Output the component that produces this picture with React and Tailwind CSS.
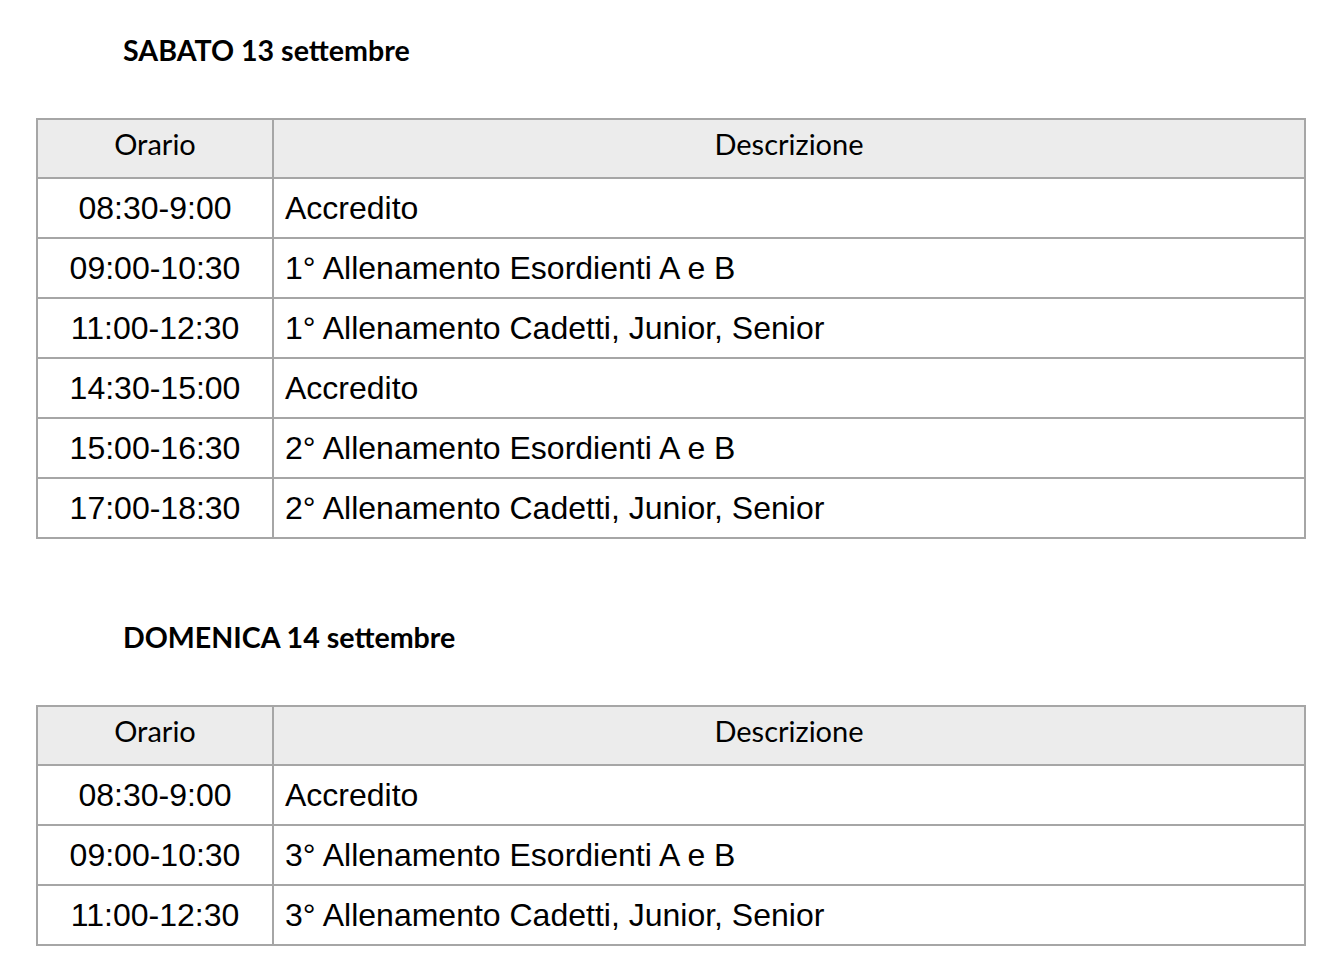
import React from "react";

const days = [
  {
    title: "SABATO 13 settembre",
    rows: [
      ["08:30-9:00", "Accredito"],
      ["09:00-10:30", "1° Allenamento Esordienti A e B"],
      ["11:00-12:30", "1° Allenamento Cadetti, Junior, Senior"],
      ["14:30-15:00", "Accredito"],
      ["15:00-16:30", "2° Allenamento Esordienti A e B"],
      ["17:00-18:30", "2° Allenamento Cadetti, Junior, Senior"],
    ],
  },
  {
    title: "DOMENICA 14 settembre",
    rows: [
      ["08:30-9:00", "Accredito"],
      ["09:00-10:30", "3° Allenamento Esordienti A e B"],
      ["11:00-12:30", "3° Allenamento Cadetti, Junior, Senior"],
    ],
  },
];

const DayTable = ({ day }) => {
  return (
    <div>
      <h2 className="pl-[87px] h-[40px] leading-[40px] font-['Lato',sans-serif] font-bold text-[28.6px] text-black mb-[48px]">
        {day.title}
      </h2>

      <table className="w-full border-collapse">
        <thead>
          <tr className="bg-[#ececec] font-['Lato',sans-serif] text-[29px] text-black">
            <th className="w-[236px] h-[59px] pt-0 pb-[10px] font-normal text-center border-2 border-[#a6a6a6]">
              Orario
            </th>
            <th className="h-[59px] pt-0 pb-[10px] font-normal text-center border-2 border-[#a6a6a6]">
              Descrizione
            </th>
          </tr>
        </thead>
        <tbody className="font-['Liberation_Sans',Arial,sans-serif] text-[32px] text-black">
          {day.rows.map((r, i) => (
            <tr key={i}>
              <td className="h-[60px] p-0 text-center border-2 border-[#a6a6a6]">
                {r[0]}
              </td>
              <td className="h-[60px] py-0 pl-[11px] border-2 border-[#a6a6a6]">
                {r[1]}
              </td>
            </tr>
          ))}
        </tbody>
      </table>
    </div>
  );
};

export default function App() {
  return (
    <div className="bg-white w-[1334px] min-h-[975px] pl-[36px] pr-[28px] pt-[30px]">
      <div className="flex flex-col gap-[78px]">
        {days.map((d) => (
          <DayTable key={d.title} day={d} />
        ))}
      </div>
    </div>
  );
}
